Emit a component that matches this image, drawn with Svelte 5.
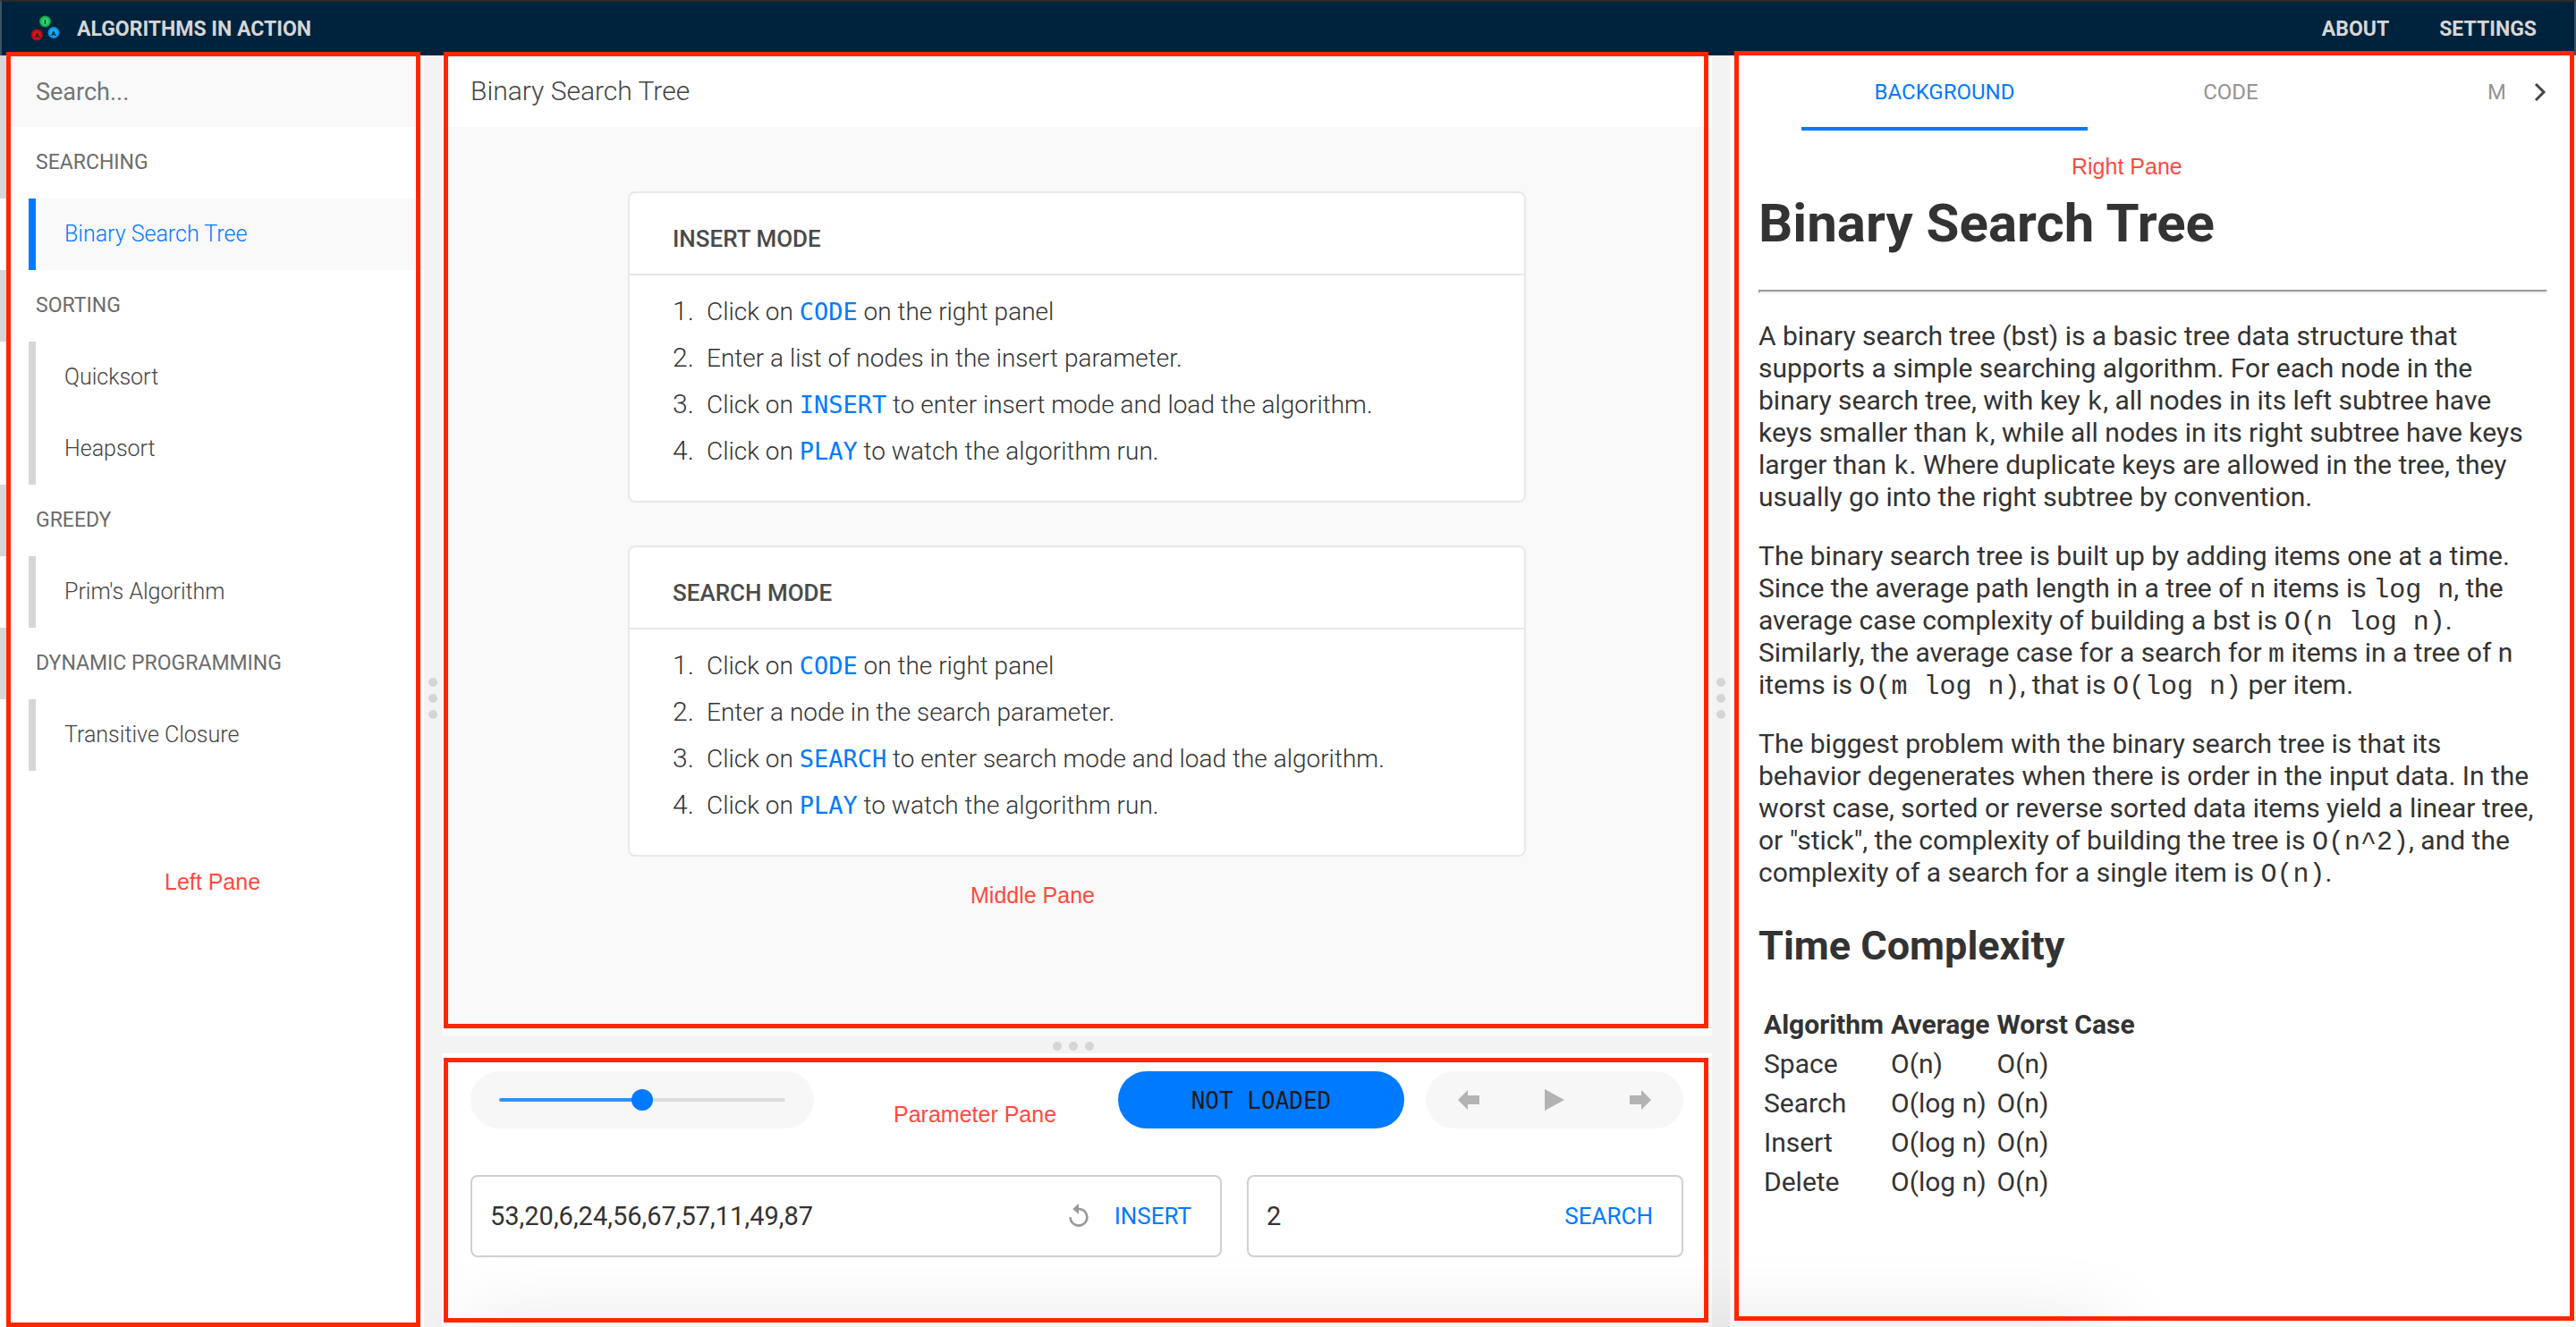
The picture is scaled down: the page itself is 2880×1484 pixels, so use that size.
<script lang="ts">
  const groups = [
    { name: 'Searching', items: ['Binary Search Tree'] },
    { name: 'Sorting', items: ['Quicksort', 'Heapsort'] },
    { name: 'Greedy', items: ["Prim's Algorithm"] },
    { name: 'Dynamic Programming', items: ['Transitive Closure'] },
  ];

  type Step = { before: string; key?: string; after?: string };
  const modes: { title: string; steps: Step[] }[] = [
    {
      title: 'Insert Mode',
      steps: [
        { before: 'Click on ', key: 'CODE', after: ' on the right panel' },
        { before: 'Enter a list of nodes in the insert parameter.' },
        { before: 'Click on ', key: 'INSERT', after: ' to enter insert mode and load the algorithm.' },
        { before: 'Click on ', key: 'PLAY', after: ' to watch the algorithm run.' },
      ],
    },
    {
      title: 'Search Mode',
      steps: [
        { before: 'Click on ', key: 'CODE', after: ' on the right panel' },
        { before: 'Enter a node in the search parameter.' },
        { before: 'Click on ', key: 'SEARCH', after: ' to enter search mode and load the algorithm.' },
        { before: 'Click on ', key: 'PLAY', after: ' to watch the algorithm run.' },
      ],
    },
  ];

  const complexity = [
    ['Space', 'O(n)', 'O(n)'],
    ['Search', 'O(log n)', 'O(n)'],
    ['Insert', 'O(log n)', 'O(n)'],
    ['Delete', 'O(log n)', 'O(n)'],
  ];

  let selected = $state('Binary Search Tree');
  let speed = $state(50);
  let nodes = $state('53,20,6,24,56,67,57,11,49,87');
  let target = $state('2');
  let tab = $state('Background');
</script>

<div class="app">
  <header class="topbar">
    <a class="brand" href="#home">
      <svg class="logo" viewBox="0 0 34 30" aria-hidden="true">
        <defs>
          <radialGradient id="g"><stop offset="0.4" stop-color="#2fd873" /><stop offset="1" stop-color="#0d9a45" /></radialGradient>
          <radialGradient id="r"><stop offset="0.4" stop-color="#e01515" /><stop offset="1" stop-color="#a80c0c" /></radialGradient>
          <radialGradient id="b"><stop offset="0.4" stop-color="#12b4ff" /><stop offset="1" stop-color="#0a86d8" /></radialGradient>
        </defs>
        <circle cx="16.5" cy="7" r="6.5" fill="url(#g)" />
        <circle cx="7.3" cy="22" r="6.5" fill="url(#r)" />
        <circle cx="26" cy="19.5" r="6.5" fill="url(#b)" />
        <text x="16.5" y="10">I</text>
        <text x="7.3" y="25">A</text>
        <text x="26" y="22.5">A</text>
      </svg>
      <span>ALGORITHMS IN ACTION</span>
    </a>
    <nav class="links">
      <a href="#about">ABOUT</a>
      <a href="#settings">SETTINGS</a>
    </nav>
  </header>

  <main class="panes">
    <aside class="pane sidebar">
      <input class="search" type="search" placeholder="Search..." aria-label="Search algorithms" />
      {#each groups as group}
        <h2 class="category">{group.name}</h2>
        <ul class="items">
          {#each group.items as item}
            <li>
              <button class="item" class:active={item === selected} onclick={() => (selected = item)}>{item}</button>
            </li>
          {/each}
        </ul>
      {/each}
      <div class="frame frame-left"><span class="note note-left">Left Pane</span></div>
    </aside>

    <div class="gutter"><i></i><i></i><i></i></div>

    <div class="center">
      <section class="pane stage">
        <h1 class="stage-title">Binary Search Tree</h1>
        <div class="cards">
          {#each modes as mode}
            <article class="card">
              <h2>{mode.title}</h2>
              <ol>
                {#each mode.steps as step}
                  <li><span>{step.before}{#if step.key}<b>{step.key}</b>{step.after}{/if}</span></li>
                {/each}
              </ol>
            </article>
          {/each}
        </div>
        <div class="frame frame-middle"><span class="note note-middle">Middle Pane</span></div>
      </section>

      <div class="gutter across"><i></i><i></i><i></i></div>

      <section class="pane params">
        <div class="controls">
          <div class="speed">
            <input type="range" min="0" max="100" bind:value={speed} aria-label="Speed" />
          </div>
          <button class="status">NOT LOADED</button>
          <div class="player">
            <button aria-label="Previous step">
              <svg width="24" height="22" viewBox="0 0 24 22"><path d="M0 11 11 0V6H24V16H11V22Z" /></svg>
            </button>
            <button aria-label="Play">
              <svg width="24" height="24" viewBox="0 0 24 24"><path d="M1 0 23 12 1 24Z" /></svg>
            </button>
            <button aria-label="Next step">
              <svg width="24" height="22" viewBox="0 0 24 22"><path d="M24 11 13 0V6H0V16H13V22Z" /></svg>
            </button>
          </div>
        </div>
        <div class="forms">
          <form class="field" onsubmit={(e) => e.preventDefault()}>
            <input type="text" bind:value={nodes} aria-label="Nodes to insert" />
            <button type="button" class="reset" aria-label="Reset nodes">
              <svg width="32" height="32" viewBox="0 0 24 24"><path d="M12 5V1.500L7 6l5 4.500V7c3.310 0 6 2.690 6 6s-2.690 6-6 6-6-2.690-6-6H4c0 4.420 3.580 8 8 8s8-3.580 8-8-3.580-8-8-8z" /></svg>
            </button>
            <button type="submit">INSERT</button>
          </form>
          <form class="field" onsubmit={(e) => e.preventDefault()}>
            <input type="text" bind:value={target} aria-label="Node to search" />
            <button type="submit">SEARCH</button>
          </form>
        </div>
        <div class="frame frame-params"><span class="note note-params">Parameter Pane</span></div>
      </section>
    </div>

    <div class="gutter"><i></i><i></i><i></i></div>

    <section class="pane info">
      <div class="tabbar">
        <div class="tabs" role="tablist">
          {#each ['Background', 'Code', 'More'] as name}
            <button role="tab" aria-selected={name === tab} class:active={name === tab} onclick={() => (tab = name)}>{name}</button>
          {/each}
        </div>
        <button class="scroll" aria-label="More tabs">
          <svg width="16" height="22" viewBox="0 0 16 22"><path d="M3 2 12 11 3 20" /></svg>
        </button>
      </div>
      <div class="article">
        <h1>Binary Search Tree</h1>
        <hr />
        <p>A binary search tree (bst) is a basic tree data structure that supports a simple searching algorithm. For each node in the binary search tree, with key <code>k</code>, all nodes in its left subtree have keys smaller than <code>k</code>, while all nodes in its right subtree have keys larger than <code>k</code>. Where duplicate keys are allowed in the tree, they usually go into the right subtree by convention.</p>
        <p>The binary search tree is built up by adding items one at a time. Since the average path length in a tree of <code>n</code> items is <code>log n</code>, the average case complexity of building a bst is <code>O(n log n)</code>. Similarly, the average case for a search for <code>m</code> items in a tree of n items is <code>O(m log n)</code>, that is <code>O(log n)</code> per item.</p>
        <p>The biggest problem with the binary search tree is that its behavior degenerates when there is order in the input data. In the worst case, sorted or reverse sorted data items yield a linear tree, or "stick", the complexity of building the tree is <code>O(n^2)</code>, and the complexity of a search for a single item is <code>O(n)</code>.</p>
        <h2>Time Complexity</h2>
        <table>
          <thead>
            <tr><th>Algorithm</th><th>Average</th><th>Worst Case</th></tr>
          </thead>
          <tbody>
            {#each complexity as row}
              <tr>{#each row as cell}<td>{cell}</td>{/each}</tr>
            {/each}
          </tbody>
        </table>
      </div>
      <div class="frame frame-right"><span class="note note-right">Right Pane</span></div>
    </section>
  </main>
  <div class="shade"><div class="shade-source"></div></div>
</div>

<style>
  :global(body) {
    margin: 0;
  }
  .app {
    position: relative;
    display: flex;
    flex-direction: column;
    min-height: 100vh;
    font-family: Roboto, 'Liberation Sans', sans-serif;
    color: #333;
    background: #fff;
  }
  .app :is(h1, h2, ul, ol, p) {
    margin: 0;
    padding: 0;
  }
  button,
  input {
    font: inherit;
    color: inherit;
    border: 0;
    padding: 0;
    margin: 0;
    background: none;
    outline: none;
  }
  button {
    cursor: pointer;
  }

  .topbar {
    display: flex;
    align-items: center;
    justify-content: space-between;
    height: 60px;
    padding: 0 42px 0 32px;
    border: 2px solid #3b5266;
    border-top-color: #2b2b2b;
    border-bottom: 0;
    background: #00233d;
    color: #d6d6d6;
    font-size: 23px;
    font-weight: 700;
  }
  .topbar a {
    color: inherit;
    text-decoration: none;
  }
  .brand {
    display: flex;
    align-items: center;
    gap: 18px;
  }
  .logo {
    width: 34px;
    height: 30px;
  }
  .logo text {
    font-size: 8px;
    font-weight: 700;
    text-anchor: middle;
    fill: #0b2033;
  }
  .links {
    display: flex;
    gap: 56px;
  }

  .panes {
    flex: 1;
    display: grid;
    grid-template-columns: 474fr 20px 1420fr 20px 946fr;
  }
  .pane {
    position: relative;
    min-width: 0;
    background: #fff;
  }
  .gutter {
    display: flex;
    flex-direction: column;
    align-items: center;
    justify-content: center;
    gap: 8px;
    padding-top: 16px;
    background: #f3f3f3;
  }
  .gutter.across {
    flex-direction: row;
    padding: 4px 8px 0 0;
  }
  .gutter i {
    width: 10px;
    height: 10px;
    border-radius: 50%;
    background: #d5d5d5;
  }

  .search {
    display: block;
    box-sizing: border-box;
    width: 100%;
    height: 80px;
    padding: 2px 32px 0;
    border-left: 8px solid #d6d6d6;
    background: #f9f9f9;
    font-size: 27px;
  }
  .search::placeholder {
    color: #757575;
    opacity: 1;
  }
  .app .category {
    padding: 0 32px;
    border-left: 8px solid #d6d6d6;
    font-size: 23px;
    font-weight: 400;
    line-height: 80px;
    text-transform: uppercase;
    color: #6b6b6b;
  }
  .app .items {
    padding-left: 32px;
    list-style: none;
  }
  .item {
    display: block;
    width: 100%;
    padding: 0 32px;
    border-left: 8px solid #d6d6d6;
    font-size: 25px;
    font-weight: 300;
    line-height: 80px;
    text-align: left;
    color: #444;
  }
  .item.active {
    border-left-color: #007aff;
    background: #f9f9f9;
    color: #007aff;
  }

  .center {
    display: grid;
    grid-template-rows: 1096fr 20px 306fr;
    min-width: 0;
  }
  .stage {
    background: #f9f9f9;
  }
  .app .stage-title {
    padding: 0 32px;
    background: #fff;
    font-size: 30px;
    font-weight: 300;
    line-height: 80px;
    color: #444;
  }
  .cards {
    display: flex;
    flex-direction: column;
    gap: 48px;
    padding: 72px 208px;
  }
  .card {
    border: 2px solid #e8e8e8;
    border-radius: 8px;
    background: #fff;
  }
  .app .card h2 {
    padding: 36px 48px 24px;
    border-bottom: 2px solid #e8e8e8;
    font-size: 26px;
    font-weight: 500;
    line-height: 30px;
    text-transform: uppercase;
    color: #4a4a4a;
  }
  .app .card ol {
    padding: 14px 48px 30px;
    list-style: none;
    counter-reset: step;
  }
  .card li {
    display: flex;
    align-items: center;
    height: 52px;
    font-size: 28px;
    font-weight: 300;
    counter-increment: step;
  }
  .card li::before {
    content: counter(step) '.';
    flex: none;
    width: 38px;
    font-size: 30px;
    line-height: 52px;
  }
  .card b {
    font-family: 'DejaVu Sans Mono', 'Liberation Mono', monospace;
    font-size: 27px;
    font-weight: 400;
    color: #007aff;
  }

  .params {
    padding: 20px 32px;
  }
  .controls {
    display: flex;
    gap: 24px;
    height: 64px;
  }
  .speed {
    display: flex;
    align-items: center;
    width: 320px;
    margin-right: auto;
    padding: 0 32px;
    border-radius: 32px;
    background: #f7f7f7;
  }
  .speed input {
    width: 100%;
    height: 24px;
    appearance: none;
  }
  .speed input::-webkit-slider-runnable-track {
    height: 4px;
    border-radius: 2px;
    background: linear-gradient(to right, #2d92ff 50%, #ddd 50%);
  }
  .speed input::-webkit-slider-thumb {
    appearance: none;
    width: 24px;
    height: 24px;
    margin-top: -10px;
    border-radius: 50%;
    background: #007aff;
  }
  .status {
    width: 320px;
    padding-top: 2px;
    border-radius: 32px;
    background: #007aff;
    color: #1a1a1a;
    font-family: 'DejaVu Sans Mono', 'Liberation Mono', monospace;
    font-size: 26px;
  }
  .player {
    display: grid;
    grid-template-columns: repeat(3, 96px);
    border-radius: 32px;
    background: #f7f7f7;
  }
  .player button {
    display: grid;
    place-items: center;
  }
  .player path {
    fill: #b3b3b3;
  }
  .forms {
    display: grid;
    grid-template-columns: 840fr 488fr;
    gap: 28px;
    margin-top: 52px;
  }
  .field {
    display: flex;
    align-items: center;
    gap: 24px;
    box-sizing: border-box;
    min-width: 0;
    height: 92px;
    padding: 0 32px 0 20px;
    border: 2px solid #d0d0d0;
    border-radius: 8px;
  }
  .field input {
    flex: 1;
    min-width: 0;
    font-size: 29px;
  }
  .field button {
    font-size: 26px;
    color: #007aff;
  }
  .field .reset {
    display: flex;
  }
  .reset path {
    fill: #999;
  }

  .tabbar {
    display: flex;
    height: 84px;
    padding-left: 80px;
  }
  .tabs {
    flex: 1;
    display: flex;
    overflow: hidden;
  }
  .tabs button {
    flex: none;
    width: 320px;
    padding-top: 2px;
    border-bottom: 4px solid transparent;
    font-size: 24px;
    text-transform: uppercase;
    color: #949494;
  }
  .tabs button.active {
    border-bottom-color: #007aff;
    color: #007aff;
  }
  .scroll {
    display: grid;
    place-items: center;
    width: 80px;
    padding-bottom: 2px;
  }
  .scroll path {
    fill: none;
    stroke: #444;
    stroke-width: 3px;
  }
  .article {
    padding: 68px 32px 32px;
    font-size: 30px;
    line-height: 36px;
  }
  .article h1 {
    font-size: 60px;
    line-height: 72px;
  }
  .article hr {
    height: 0;
    margin: 38px 0 30px;
    border: 2px solid;
    border-color: #999 #eee #eee #999;
  }
  .app .article p {
    margin-bottom: 30px;
  }
  .article code {
    font-family: 'Liberation Mono', monospace;
    font-size: 30px;
    line-height: 30px;
  }
  .app .article h2 {
    margin: 37px 0;
    font-size: 45px;
    line-height: 54px;
  }
  table {
    border-spacing: 4px;
  }
  th,
  td {
    padding: 2px;
    text-align: left;
  }

  .frame {
    position: absolute;
    z-index: 2;
    border: 5px solid #ff2600;
    pointer-events: none;
  }
  .frame-left {
    inset: -4px 4px 0 7px;
  }
  .frame-middle {
    inset: -4px 4px 8px 2px;
  }
  .frame-params {
    inset: 5px 4px 5px 2px;
  }
  .frame-right {
    inset: -5px 2px 7px 5px;
  }
  .note {
    position: absolute;
    font-family: 'Liberation Sans', sans-serif;
    font-size: 25px;
    line-height: 28px;
    white-space: nowrap;
    color: #ff4a3d;
  }
  .note-left {
    top: 909px;
    left: 172px;
  }
  .note-middle {
    top: 924px;
    left: 584px;
  }
  .note-params {
    top: 44px;
    left: 498px;
  }
  .note-right {
    top: 110px;
    left: 372px;
  }

  .shade {
    position: absolute;
    inset: auto 0 0;
    height: 120px;
    overflow: hidden;
    pointer-events: none;
  }
  .shade-source {
    height: 40px;
    margin: 126px 18% 0;
    box-shadow: 0 0 90px rgba(0, 0, 0, 0.16);
  }
</style>
